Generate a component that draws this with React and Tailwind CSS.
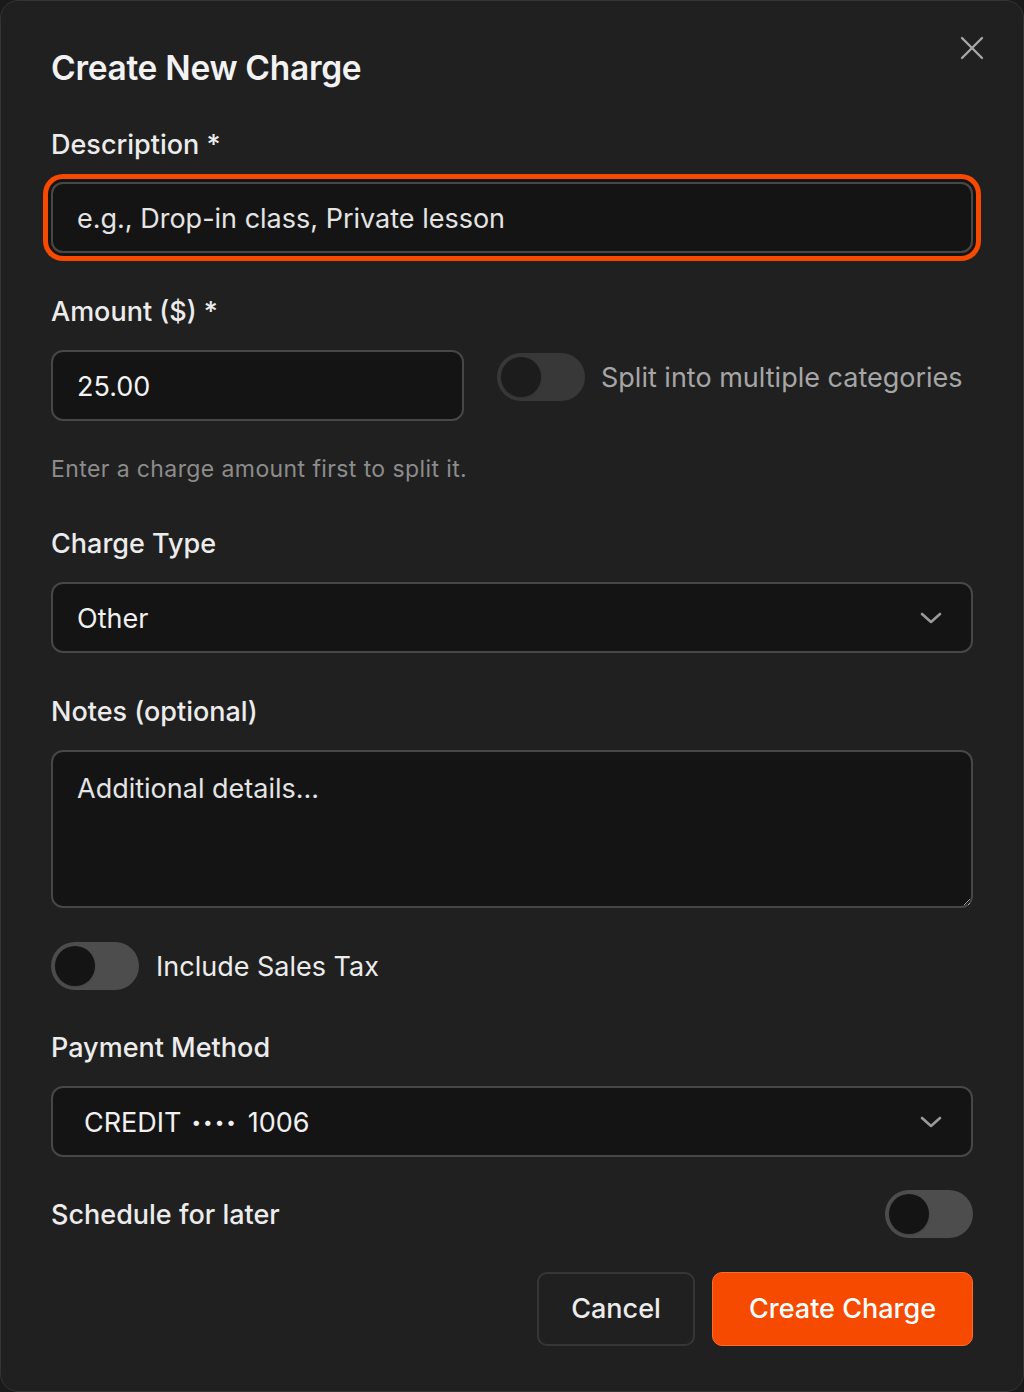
import { X } from 'lucide-react';

function Toggle({ dim = false }) {
  return (
    <div
      className={`flex h-[48px] w-[88px] shrink-0 items-center rounded-full px-[4px] ${
        dim ? 'bg-[#383838]' : 'bg-[#4d4d4d]'
      }`}
    >
      <div
        className={`size-[40px] rounded-full shadow-sm ${dim ? 'bg-[#1c1c1c]' : 'bg-[#141414]'}`}
      />
    </div>
  );
}

function Chevron() {
  return (
    <svg width="24" height="14" viewBox="0 0 24 14" fill="none" className="shrink-0">
      <path d="M3 3l9 8 9-8" stroke="#9a9a9a" strokeWidth="2.6" strokeLinecap="round" strokeLinejoin="round" />
    </svg>
  );
}

function Label({ children, className = '' }) {
  return <div className={`text-[27px] font-medium leading-[36px] text-[#ececec] ${className}`}>{children}</div>;
}

function SelectBox({ children, pad = 'pl-[24px]' }) {
  return (
    <div
      className={`mt-[20px] flex h-[71px] items-center justify-between rounded-[12px] border-2 border-[#474747] bg-[#141414] ${pad} pr-[28px]`}
    >
      <span className="flex items-center pt-[2px] text-[27px] leading-none text-[#f0f0f0]">{children}</span>
      <Chevron />
    </div>
  );
}

export default function App() {
  return (
    <div className="min-h-[1392px] w-[1024px] bg-[#1a1a1a] font-['Inter','Noto_Sans',sans-serif]">
      <div className="relative h-[1392px] rounded-[18px] border border-[#343434] bg-[#202020] px-[50px] pt-[47px]">
        <button className="absolute right-[31px] top-[27px] text-[#a8a8a8]" aria-label="Close">
          <X size={40} strokeWidth={1.4} />
        </button>

        <h2 className="text-[33.5px] font-semibold leading-[40px] tracking-[-0.3px] text-[#f2f2f2]">Create New Charge</h2>

        <Label className="mt-[39px]">Description *</Label>
        <div className="mt-[19px] rounded-[12px] ring-[5px] ring-[#f54a00] ring-offset-[3px] ring-offset-[#141414]">
          <input
            className="block h-[71px] w-full rounded-[12px] border-2 border-[#474747] bg-[#141414] px-[24px] pt-[2px] text-[27px] text-[#f0f0f0] outline-none placeholder:text-[#e4e4e4]"
            placeholder="e.g., Drop-in class, Private lesson"
          />
        </div>

        <Label className="mt-[41px]">Amount ($) *</Label>
        <div className="mt-[20px] flex items-start gap-[33px]">
          <div className="flex h-[71px] w-[413px] items-center rounded-[12px] border-2 border-[#474747] bg-[#141414] px-[24px] pt-[3px] text-[27px] text-[#f2f2f2]">
            25.00
          </div>
          <div className="mt-[3px] flex items-center gap-[16px]">
            <Toggle dim />
            <span className="whitespace-nowrap text-[27px] leading-none text-[#a6a6a6]">Split into multiple categories</span>
          </div>
        </div>

        <p className="mt-[33px] text-[23px] leading-[30px] tracking-[0.4px] text-[#8c8c8c]">
          Enter a charge amount first to split it.
        </p>

        <Label className="mt-[42px]">Charge Type</Label>
        <SelectBox>Other</SelectBox>

        <Label className="mt-[41px]">Notes (optional)</Label>
        <textarea
          className="mt-[20px] block h-[158px] w-full resize-y rounded-[12px] border-2 border-[#474747] bg-[#141414] px-[24px] py-[19px] text-[27px] leading-[36px] text-[#f0f0f0] outline-none placeholder:text-[#e4e4e4]"
          placeholder="Additional details..."
        />

        <div className="mt-[34px] flex items-center gap-[17px]">
          <Toggle />
          <span className="text-[27px] leading-none text-[#ececec]">Include Sales Tax</span>
        </div>

        <Label className="mt-[40px]">Payment Method</Label>
        <SelectBox pad="pl-[31px]">
          CREDIT
          <span className="mx-[10px] text-[17px] tracking-[2px]">••••</span>
          1006
        </SelectBox>

        <div className="mt-[33px] flex items-center justify-between">
          <span className="text-[27px] font-medium leading-none text-[#ececec]">Schedule for later</span>
          <Toggle />
        </div>

        <div className="mt-[34px] flex justify-end gap-[17px]">
          <button className="h-[74px] w-[158px] rounded-[10px] border-2 border-[#363636] text-[27px] font-medium text-[#ececec]">
            Cancel
          </button>
          <button className="h-[74px] w-[261px] rounded-[10px] border border-[#ff6a2e] bg-[#f54a00] text-[27px] font-medium text-white">
            Create Charge
          </button>
        </div>
      </div>
    </div>
  );
}
